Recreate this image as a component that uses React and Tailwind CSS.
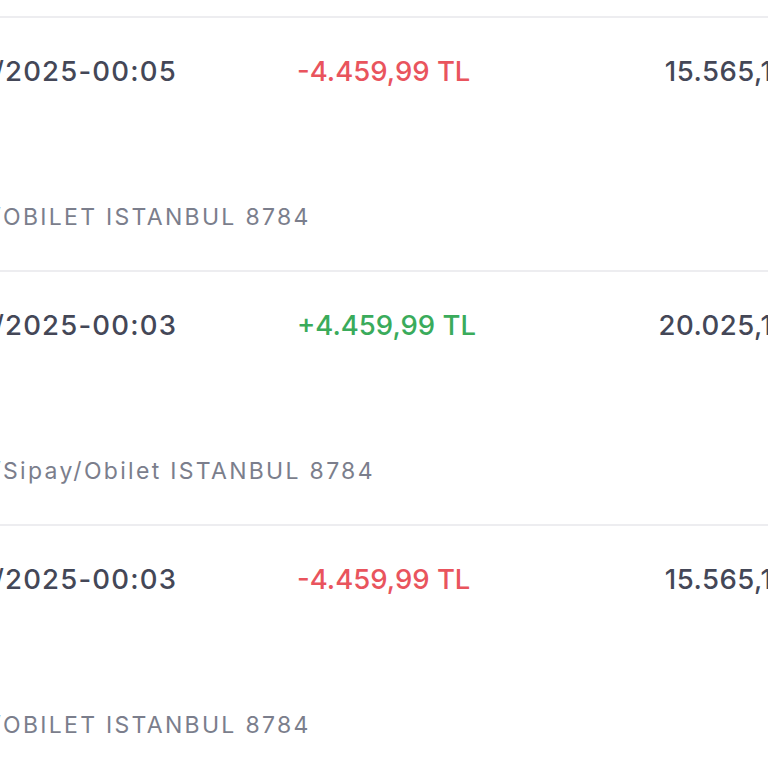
import React from "react";

const rows = [
  { pre: "31/07/", date: "2025-00:05", amount: "-4.459,99 TL", pos: false, balance: "15.565,10 TL", dpre: "KART/", desc: "OBILET ISTANBUL 8784" },
  { pre: "31/07/", date: "2025-00:03", amount: "+4.459,99 TL", pos: true, balance: "20.025,10 TL", dpre: "İADE/", desc: "Sipay/Obilet ISTANBUL 8784" },
  { pre: "31/07/", date: "2025-00:03", amount: "-4.459,99 TL", pos: false, balance: "15.565,10 TL", dpre: "KART/", desc: "OBILET ISTANBUL 8784" },
];

export default function App() {
  return (
    <div className="w-[768px] h-[768px] overflow-hidden bg-white" style={{ fontFamily: "Inter, 'Noto Sans', sans-serif" }}>
      <div className="h-[16px]" />
      {rows.map((r, i) => (
        <div key={i} className="border-t-2 border-[#ededf0] pt-[38px] pb-[39px]">
          <div className="flex items-center h-[32px] whitespace-nowrap">
            <div className="w-[297px] shrink-0 flex text-[27.5px] font-medium tracking-[1.2px] text-[#444757]">
              <span className="w-[5px] shrink-0 flex justify-end">
                <span className="shrink-0">{r.pre}</span>
              </span>
              <span>{r.date}</span>
            </div>
            <div className={"w-[300px] shrink-0 text-[27.5px] font-medium tracking-[0px] " + (r.pos ? "text-[#3aab5b]" : "text-[#e9545d]")}>
              {r.amount}
            </div>
            <div className="w-[236px] shrink-0 flex justify-end text-[27.5px] font-medium tracking-[0.5px] text-[#444757]">
              {r.balance}
            </div>
          </div>
          <div className="h-[115px]" />
          <div className="h-[28px] flex items-center whitespace-nowrap text-[23px] tracking-[2.3px] text-[#7b7e8c]">
            <span className="w-[3px] shrink-0 flex justify-end">
              <span className="shrink-0">{r.dpre}</span>
            </span>
            <span>{r.desc}</span>
          </div>
        </div>
      ))}
    </div>
  );
}
